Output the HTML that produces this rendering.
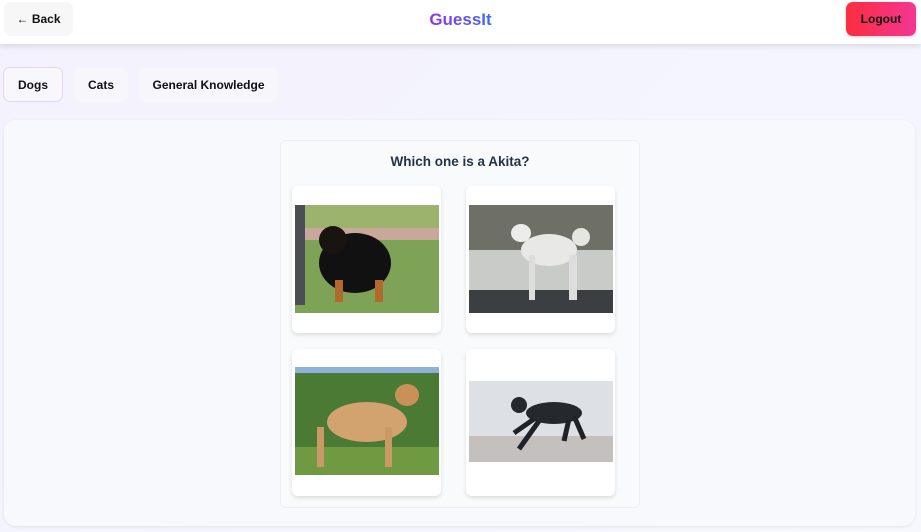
<!DOCTYPE html>
<html><head><style>
*{box-sizing:border-box;margin:0;padding:0}
body{width:921px;height:532px;overflow:hidden;background:linear-gradient(135deg,#f3f1fd,#f6f8fd);font-family:"Liberation Sans",sans-serif;position:relative}
.hdr{position:absolute;left:0;top:0;width:921px;height:44px;background:#fff;box-shadow:0 2px 6px rgba(0,0,0,.12)}
.btn{position:absolute;border-radius:7px;font-size:12px;font-weight:bold;color:#111;display:flex;align-items:center;justify-content:center}
.title{position:absolute;left:0;width:921px;top:10px;text-align:center;font-size:17px;font-weight:bold}
.title span{background:linear-gradient(90deg,#9333ea,#3b6cf0);-webkit-background-clip:text;color:transparent}
.panel{position:absolute;left:4px;top:120px;width:911px;height:406px;background:#f8f9fd;border-radius:12px;box-shadow:0 1px 3px rgba(0,0,0,.08)}
.inner{position:absolute;left:280px;top:140px;width:360px;height:368px;background:#f8fafc;border:1px solid #eceef2;border-radius:6px}
.q{position:absolute;left:280px;width:360px;top:154px;text-align:center;font-size:13.5px;font-weight:bold;color:#243447}
.card{position:absolute;width:149px;height:147px;background:#fff;border-radius:6px;box-shadow:0 2px 4px rgba(0,0,0,.12)}
.card svg{position:absolute;left:3px}
</style></head><body>
<div class="hdr"></div>
<div class="btn" style="left:4px;top:2px;width:69px;height:34px;background:#f7f7f8">← Back</div>
<div class="title"><span>GuessIt</span></div>
<div class="btn" style="left:846px;top:2px;width:70px;height:34px;background:linear-gradient(90deg,#fb2d3e,#f43694);box-shadow:0 1px 3px rgba(0,0,0,.2)">Logout</div>
<div class="btn" style="left:3px;top:67px;width:60px;height:35px;background:#f8f7fb;border:1px solid #e4d3fb">Dogs</div>
<div class="btn" style="left:74px;top:68px;width:54px;height:34px;background:#f7f6fa">Cats</div>
<div class="btn" style="left:139px;top:68px;width:139px;height:34px;background:#f7f6fa">General Knowledge</div>
<div class="panel"></div>
<div class="inner"></div>
<div class="q">Which one is a Akita?</div>
<div class="card" style="left:292px;top:186px"><svg style="top:19px" width="144" height="108"><rect width="144" height="108" fill="#7fa356"/><rect y="0" width="144" height="25" fill="#9bb36c"/><rect y="23" width="144" height="12" fill="#c8a89a"/><rect x="0" width="10" height="100" fill="#4b4e55"/><ellipse cx="60" cy="58" rx="36" ry="30" fill="#111"/><ellipse cx="38" cy="35" rx="14" ry="14" fill="#1a1410"/><rect x="40" y="75" width="8" height="22" fill="#b06a2e"/><rect x="80" y="75" width="8" height="22" fill="#b06a2e"/></svg></div>
<div class="card" style="left:466px;top:186px"><svg style="top:19px" width="144" height="108"><rect width="144" height="108" fill="#6e7068"/><rect y="45" width="144" height="45" fill="#c9cbc8"/><rect y="85" width="144" height="23" fill="#3c3f42"/><ellipse cx="80" cy="45" rx="28" ry="16" fill="#e8e8e6"/><ellipse cx="52" cy="28" rx="10" ry="9" fill="#ececea"/><circle cx="112" cy="32" r="9" fill="#e5e5e2"/><rect x="60" y="50" width="6" height="45" fill="#ddd"/><rect x="100" y="50" width="8" height="45" fill="#ddd"/></svg></div>
<div class="card" style="left:292px;top:349px"><svg style="top:18px" width="144" height="108"><rect width="144" height="108" fill="#4b7a34"/><rect width="144" height="6" fill="#8fb0d8"/><rect y="80" width="144" height="28" fill="#6f9a42"/><ellipse cx="72" cy="55" rx="40" ry="20" fill="#d3a36f"/><ellipse cx="112" cy="28" rx="12" ry="11" fill="#c89157"/><rect x="22" y="60" width="7" height="40" fill="#c99a66"/><rect x="90" y="60" width="7" height="40" fill="#c99a66"/></svg></div>
<div class="card" style="left:466px;top:349px"><svg style="top:32px" width="144" height="81"><rect width="144" height="81" fill="#dde1e6"/><rect y="55" width="144" height="26" fill="#c4c0be"/><ellipse cx="85" cy="32" rx="28" ry="11" fill="#25292e"/><ellipse cx="50" cy="24" rx="8" ry="8" fill="#25292e"/><path d="M65 38 L45 52 M70 40 L50 68 M105 35 L115 58 M100 38 L95 60" stroke="#1f2226" stroke-width="5"/></svg></div>
</body></html>
